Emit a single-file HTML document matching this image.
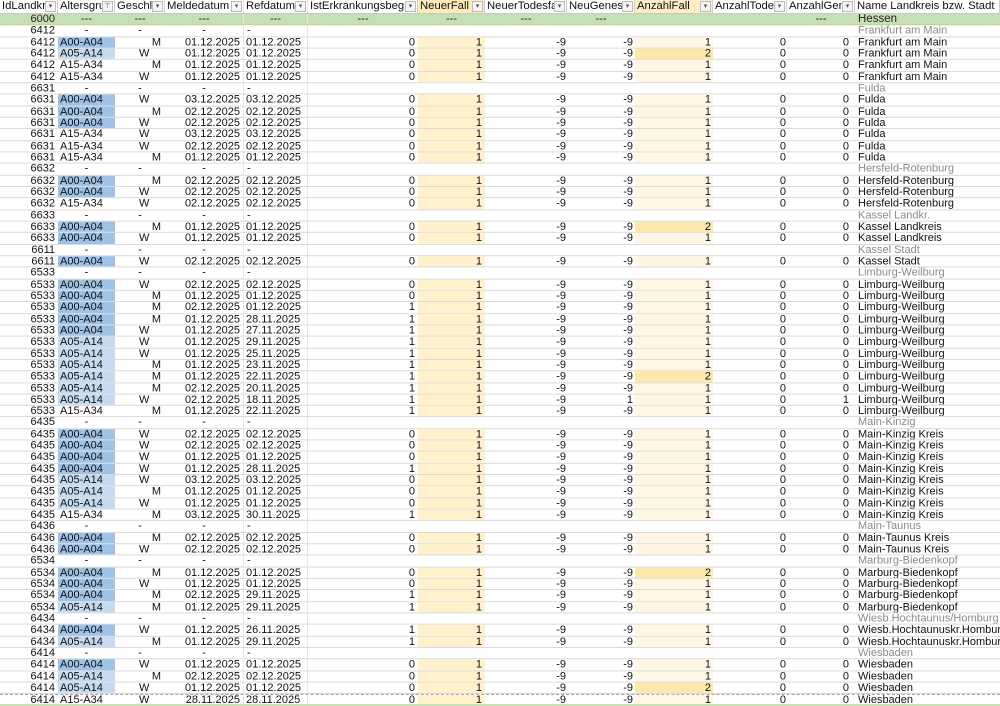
<!DOCTYPE html>
<html><head><meta charset="utf-8"><style>
*{margin:0;padding:0;box-sizing:border-box}
body{width:1000px;height:706px;overflow:hidden;background:#fff;font-family:"Liberation Sans",Arial,sans-serif;font-size:11px;color:#111;position:relative}
.h{position:absolute;left:0;top:0;height:13.5px;width:1000px;display:flex;border-bottom:1px solid #c8c8c8;background:#fff}
.h>i{font-style:normal;position:relative;overflow:hidden;white-space:nowrap;border-right:1px solid #d0d0d0;padding-left:2px;line-height:13px;font-size:11.3px}
.h>i>s{position:absolute;right:1px;top:1px;width:11px;height:11px;border:1px solid #bbb;background:#f4f4f4;text-decoration:none;font-size:7px;line-height:9px;text-align:center;color:#555}
.b{position:absolute;left:0;top:13.5px;width:1000px;transform:scaleY(1.0177);transform-origin:0 0}
.r{display:flex;height:11.333px;border-bottom:1px solid #dadada;line-height:10.5px;white-space:nowrap}
.r>i{font-style:normal;overflow:hidden;flex:none;display:block}
.h>i:nth-child(1),.r>i:nth-child(1){width:58px;text-align:right;padding-right:3px}
.h>i:nth-child(2),.r>i:nth-child(2){width:57px;padding-left:2px}
.h>i:nth-child(3),.r>i:nth-child(3){width:50px}
.h>i:nth-child(4),.r>i:nth-child(4){width:79px;text-align:right;padding-right:3px;border-right:1px solid #e6e6e6}
.h>i:nth-child(5),.r>i:nth-child(5){width:64px;padding-left:2px;border-right:1px solid #e6e6e6}
.h>i:nth-child(6),.r>i:nth-child(6){width:110px;text-align:right;padding-right:3px}
.h>i:nth-child(7),.r>i:nth-child(7){width:67px;text-align:right;padding-right:3px;background:#fff1cb}
.h>i:nth-child(8),.r>i:nth-child(8){width:82px;text-align:right;padding-right:1px}
.h>i:nth-child(9),.r>i:nth-child(9){width:68px;text-align:right;padding-right:2px}
.h>i:nth-child(10),.r>i:nth-child(10){width:78px;text-align:right;padding-right:2px;background:#fff7e3}
.h>i:nth-child(11),.r>i:nth-child(11){width:74px;text-align:right;padding-right:1px}
.h>i:nth-child(12),.r>i:nth-child(12){width:68px;text-align:right;padding-right:6px}
.h>i:nth-child(13),.r>i:nth-child(13){width:145px;padding-left:3px}
.h>i{text-align:left!important;padding-left:2px!important}
.h>i:nth-child(7){background:#fdebb8}
.h>i:nth-child(10){background:#fdedc4}
.r>i.x{background:#9fc3e7}
.r>i.y{background:#c4dbf1}
.r>i.m{text-align:right;padding-right:4px}
.r>i.w{padding-left:24px}
.r>i.t{background:#fde7ab!important}
.d>i:nth-child(7),.d>i:nth-child(10){background:none!important}
.d>i:nth-child(2),.d>i:nth-child(3),.d>i:nth-child(4){text-align:center;padding:0}
.d>i:nth-child(5){padding-left:3px}
.d>i:nth-child(13){color:#8a8a8a}
.g{background:#c6e0b4;border-bottom:1px solid #b5d3a0}
.g>i{background:none!important;color:#222}
.g>i:nth-child(n+2):nth-child(-n+12){text-align:center!important;padding:0!important}
.g>i:nth-child(13){font-size:11.5px}
.last{border-top:1px dashed #999}
.foot{position:absolute;left:0;top:704px;width:1000px;height:2px;background:#c6e0b4}
</style></head><body>
<div class="h"><i>IdLandkre<s>▾</s></i><i>Altersgru<s>⊤</s></i><i>Geschle<s>▾</s></i><i>Meldedatum<s>▾</s></i><i>Refdatum<s>▾</s></i><i>IstErkrankungsbegi<s>▾</s></i><i>NeuerFall<s>▾</s></i><i>NeuerTodesfa<s>▾</s></i><i>NeuGenese<s>▾</s></i><i>AnzahlFall<s>▾</s></i><i>AnzahlTodes<s>▾</s></i><i>AnzahlGen<s>▾</s></i><i>Name Landkreis bzw. Stadt</i></div>
<div class="b">
<div class="r g"><i>6000</i><i>---</i><i>---</i><i>---</i><i>---</i><i>---</i><i>---</i><i>---</i><i>---</i><i></i><i></i><i>---</i><i>Hessen</i></div>
<div class="r d"><i>6412</i><i>-</i><i>-</i><i>-</i><i>-</i><i></i><i></i><i></i><i></i><i></i><i></i><i></i><i>Frankfurt am Main</i></div>
<div class="r"><i>6412</i><i class="x">A00-A04</i><i class="m">M</i><i>01.12.2025</i><i>01.12.2025</i><i>0</i><i>1</i><i>-9</i><i>-9</i><i>1</i><i>0</i><i>0</i><i>Frankfurt am Main</i></div>
<div class="r"><i>6412</i><i class="y">A05-A14</i><i class="w">W</i><i>01.12.2025</i><i>01.12.2025</i><i>0</i><i>1</i><i>-9</i><i>-9</i><i class="t">2</i><i>0</i><i>0</i><i>Frankfurt am Main</i></div>
<div class="r"><i>6412</i><i>A15-A34</i><i class="m">M</i><i>01.12.2025</i><i>01.12.2025</i><i>0</i><i>1</i><i>-9</i><i>-9</i><i>1</i><i>0</i><i>0</i><i>Frankfurt am Main</i></div>
<div class="r"><i>6412</i><i>A15-A34</i><i class="w">W</i><i>01.12.2025</i><i>01.12.2025</i><i>0</i><i>1</i><i>-9</i><i>-9</i><i>1</i><i>0</i><i>0</i><i>Frankfurt am Main</i></div>
<div class="r d"><i>6631</i><i>-</i><i>-</i><i>-</i><i>-</i><i></i><i></i><i></i><i></i><i></i><i></i><i></i><i>Fulda</i></div>
<div class="r"><i>6631</i><i class="x">A00-A04</i><i class="w">W</i><i>03.12.2025</i><i>03.12.2025</i><i>0</i><i>1</i><i>-9</i><i>-9</i><i>1</i><i>0</i><i>0</i><i>Fulda</i></div>
<div class="r"><i>6631</i><i class="x">A00-A04</i><i class="m">M</i><i>02.12.2025</i><i>02.12.2025</i><i>0</i><i>1</i><i>-9</i><i>-9</i><i>1</i><i>0</i><i>0</i><i>Fulda</i></div>
<div class="r"><i>6631</i><i class="x">A00-A04</i><i class="w">W</i><i>02.12.2025</i><i>02.12.2025</i><i>0</i><i>1</i><i>-9</i><i>-9</i><i>1</i><i>0</i><i>0</i><i>Fulda</i></div>
<div class="r"><i>6631</i><i>A15-A34</i><i class="w">W</i><i>03.12.2025</i><i>03.12.2025</i><i>0</i><i>1</i><i>-9</i><i>-9</i><i>1</i><i>0</i><i>0</i><i>Fulda</i></div>
<div class="r"><i>6631</i><i>A15-A34</i><i class="w">W</i><i>02.12.2025</i><i>02.12.2025</i><i>0</i><i>1</i><i>-9</i><i>-9</i><i>1</i><i>0</i><i>0</i><i>Fulda</i></div>
<div class="r"><i>6631</i><i>A15-A34</i><i class="m">M</i><i>01.12.2025</i><i>01.12.2025</i><i>0</i><i>1</i><i>-9</i><i>-9</i><i>1</i><i>0</i><i>0</i><i>Fulda</i></div>
<div class="r d"><i>6632</i><i>-</i><i>-</i><i>-</i><i>-</i><i></i><i></i><i></i><i></i><i></i><i></i><i></i><i>Hersfeld-Rotenburg</i></div>
<div class="r"><i>6632</i><i class="x">A00-A04</i><i class="m">M</i><i>02.12.2025</i><i>02.12.2025</i><i>0</i><i>1</i><i>-9</i><i>-9</i><i>1</i><i>0</i><i>0</i><i>Hersfeld-Rotenburg</i></div>
<div class="r"><i>6632</i><i class="x">A00-A04</i><i class="w">W</i><i>02.12.2025</i><i>02.12.2025</i><i>0</i><i>1</i><i>-9</i><i>-9</i><i>1</i><i>0</i><i>0</i><i>Hersfeld-Rotenburg</i></div>
<div class="r"><i>6632</i><i>A15-A34</i><i class="w">W</i><i>02.12.2025</i><i>02.12.2025</i><i>0</i><i>1</i><i>-9</i><i>-9</i><i>1</i><i>0</i><i>0</i><i>Hersfeld-Rotenburg</i></div>
<div class="r d"><i>6633</i><i>-</i><i>-</i><i>-</i><i>-</i><i></i><i></i><i></i><i></i><i></i><i></i><i></i><i>Kassel Landkr.</i></div>
<div class="r"><i>6633</i><i class="x">A00-A04</i><i class="m">M</i><i>01.12.2025</i><i>01.12.2025</i><i>0</i><i>1</i><i>-9</i><i>-9</i><i class="t">2</i><i>0</i><i>0</i><i>Kassel Landkreis</i></div>
<div class="r"><i>6633</i><i class="x">A00-A04</i><i class="w">W</i><i>01.12.2025</i><i>01.12.2025</i><i>0</i><i>1</i><i>-9</i><i>-9</i><i>1</i><i>0</i><i>0</i><i>Kassel Landkreis</i></div>
<div class="r d"><i>6611</i><i>-</i><i>-</i><i>-</i><i>-</i><i></i><i></i><i></i><i></i><i></i><i></i><i></i><i>Kassel Stadt</i></div>
<div class="r"><i>6611</i><i class="x">A00-A04</i><i class="w">W</i><i>02.12.2025</i><i>02.12.2025</i><i>0</i><i>1</i><i>-9</i><i>-9</i><i>1</i><i>0</i><i>0</i><i>Kassel Stadt</i></div>
<div class="r d"><i>6533</i><i>-</i><i>-</i><i>-</i><i>-</i><i></i><i></i><i></i><i></i><i></i><i></i><i></i><i>Limburg-Weilburg</i></div>
<div class="r"><i>6533</i><i class="x">A00-A04</i><i class="w">W</i><i>02.12.2025</i><i>02.12.2025</i><i>0</i><i>1</i><i>-9</i><i>-9</i><i>1</i><i>0</i><i>0</i><i>Limburg-Weilburg</i></div>
<div class="r"><i>6533</i><i class="x">A00-A04</i><i class="m">M</i><i>01.12.2025</i><i>01.12.2025</i><i>0</i><i>1</i><i>-9</i><i>-9</i><i>1</i><i>0</i><i>0</i><i>Limburg-Weilburg</i></div>
<div class="r"><i>6533</i><i class="x">A00-A04</i><i class="m">M</i><i>02.12.2025</i><i>01.12.2025</i><i>1</i><i>1</i><i>-9</i><i>-9</i><i>1</i><i>0</i><i>0</i><i>Limburg-Weilburg</i></div>
<div class="r"><i>6533</i><i class="x">A00-A04</i><i class="m">M</i><i>01.12.2025</i><i>28.11.2025</i><i>1</i><i>1</i><i>-9</i><i>-9</i><i>1</i><i>0</i><i>0</i><i>Limburg-Weilburg</i></div>
<div class="r"><i>6533</i><i class="x">A00-A04</i><i class="w">W</i><i>01.12.2025</i><i>27.11.2025</i><i>1</i><i>1</i><i>-9</i><i>-9</i><i>1</i><i>0</i><i>0</i><i>Limburg-Weilburg</i></div>
<div class="r"><i>6533</i><i class="y">A05-A14</i><i class="w">W</i><i>01.12.2025</i><i>29.11.2025</i><i>1</i><i>1</i><i>-9</i><i>-9</i><i>1</i><i>0</i><i>0</i><i>Limburg-Weilburg</i></div>
<div class="r"><i>6533</i><i class="y">A05-A14</i><i class="w">W</i><i>01.12.2025</i><i>25.11.2025</i><i>1</i><i>1</i><i>-9</i><i>-9</i><i>1</i><i>0</i><i>0</i><i>Limburg-Weilburg</i></div>
<div class="r"><i>6533</i><i class="y">A05-A14</i><i class="m">M</i><i>01.12.2025</i><i>23.11.2025</i><i>1</i><i>1</i><i>-9</i><i>-9</i><i>1</i><i>0</i><i>0</i><i>Limburg-Weilburg</i></div>
<div class="r"><i>6533</i><i class="y">A05-A14</i><i class="m">M</i><i>01.12.2025</i><i>22.11.2025</i><i>1</i><i>1</i><i>-9</i><i>-9</i><i class="t">2</i><i>0</i><i>0</i><i>Limburg-Weilburg</i></div>
<div class="r"><i>6533</i><i class="y">A05-A14</i><i class="m">M</i><i>02.12.2025</i><i>20.11.2025</i><i>1</i><i>1</i><i>-9</i><i>-9</i><i>1</i><i>0</i><i>0</i><i>Limburg-Weilburg</i></div>
<div class="r"><i>6533</i><i class="y">A05-A14</i><i class="w">W</i><i>02.12.2025</i><i>18.11.2025</i><i>1</i><i>1</i><i>-9</i><i>1</i><i>1</i><i>0</i><i>1</i><i>Limburg-Weilburg</i></div>
<div class="r"><i>6533</i><i>A15-A34</i><i class="m">M</i><i>01.12.2025</i><i>22.11.2025</i><i>1</i><i>1</i><i>-9</i><i>-9</i><i>1</i><i>0</i><i>0</i><i>Limburg-Weilburg</i></div>
<div class="r d"><i>6435</i><i>-</i><i>-</i><i>-</i><i>-</i><i></i><i></i><i></i><i></i><i></i><i></i><i></i><i>Main-Kinzig</i></div>
<div class="r"><i>6435</i><i class="x">A00-A04</i><i class="w">W</i><i>02.12.2025</i><i>02.12.2025</i><i>0</i><i>1</i><i>-9</i><i>-9</i><i>1</i><i>0</i><i>0</i><i>Main-Kinzig Kreis</i></div>
<div class="r"><i>6435</i><i class="x">A00-A04</i><i class="w">W</i><i>02.12.2025</i><i>02.12.2025</i><i>0</i><i>1</i><i>-9</i><i>-9</i><i>1</i><i>0</i><i>0</i><i>Main-Kinzig Kreis</i></div>
<div class="r"><i>6435</i><i class="x">A00-A04</i><i class="w">W</i><i>01.12.2025</i><i>01.12.2025</i><i>0</i><i>1</i><i>-9</i><i>-9</i><i>1</i><i>0</i><i>0</i><i>Main-Kinzig Kreis</i></div>
<div class="r"><i>6435</i><i class="x">A00-A04</i><i class="w">W</i><i>01.12.2025</i><i>28.11.2025</i><i>1</i><i>1</i><i>-9</i><i>-9</i><i>1</i><i>0</i><i>0</i><i>Main-Kinzig Kreis</i></div>
<div class="r"><i>6435</i><i class="y">A05-A14</i><i class="w">W</i><i>03.12.2025</i><i>03.12.2025</i><i>0</i><i>1</i><i>-9</i><i>-9</i><i>1</i><i>0</i><i>0</i><i>Main-Kinzig Kreis</i></div>
<div class="r"><i>6435</i><i class="y">A05-A14</i><i class="m">M</i><i>01.12.2025</i><i>01.12.2025</i><i>0</i><i>1</i><i>-9</i><i>-9</i><i>1</i><i>0</i><i>0</i><i>Main-Kinzig Kreis</i></div>
<div class="r"><i>6435</i><i class="y">A05-A14</i><i class="w">W</i><i>01.12.2025</i><i>01.12.2025</i><i>0</i><i>1</i><i>-9</i><i>-9</i><i>1</i><i>0</i><i>0</i><i>Main-Kinzig Kreis</i></div>
<div class="r"><i>6435</i><i>A15-A34</i><i class="m">M</i><i>03.12.2025</i><i>30.11.2025</i><i>1</i><i>1</i><i>-9</i><i>-9</i><i>1</i><i>0</i><i>0</i><i>Main-Kinzig Kreis</i></div>
<div class="r d"><i>6436</i><i>-</i><i>-</i><i>-</i><i>-</i><i></i><i></i><i></i><i></i><i></i><i></i><i></i><i>Main-Taunus</i></div>
<div class="r"><i>6436</i><i class="x">A00-A04</i><i class="m">M</i><i>02.12.2025</i><i>02.12.2025</i><i>0</i><i>1</i><i>-9</i><i>-9</i><i>1</i><i>0</i><i>0</i><i>Main-Taunus Kreis</i></div>
<div class="r"><i>6436</i><i class="x">A00-A04</i><i class="w">W</i><i>02.12.2025</i><i>02.12.2025</i><i>0</i><i>1</i><i>-9</i><i>-9</i><i>1</i><i>0</i><i>0</i><i>Main-Taunus Kreis</i></div>
<div class="r d"><i>6534</i><i>-</i><i>-</i><i>-</i><i>-</i><i></i><i></i><i></i><i></i><i></i><i></i><i></i><i>Marburg-Biedenkopf</i></div>
<div class="r"><i>6534</i><i class="x">A00-A04</i><i class="m">M</i><i>01.12.2025</i><i>01.12.2025</i><i>0</i><i>1</i><i>-9</i><i>-9</i><i class="t">2</i><i>0</i><i>0</i><i>Marburg-Biedenkopf</i></div>
<div class="r"><i>6534</i><i class="x">A00-A04</i><i class="w">W</i><i>01.12.2025</i><i>01.12.2025</i><i>0</i><i>1</i><i>-9</i><i>-9</i><i>1</i><i>0</i><i>0</i><i>Marburg-Biedenkopf</i></div>
<div class="r"><i>6534</i><i class="x">A00-A04</i><i class="m">M</i><i>02.12.2025</i><i>29.11.2025</i><i>1</i><i>1</i><i>-9</i><i>-9</i><i>1</i><i>0</i><i>0</i><i>Marburg-Biedenkopf</i></div>
<div class="r"><i>6534</i><i class="y">A05-A14</i><i class="m">M</i><i>01.12.2025</i><i>29.11.2025</i><i>1</i><i>1</i><i>-9</i><i>-9</i><i>1</i><i>0</i><i>0</i><i>Marburg-Biedenkopf</i></div>
<div class="r d"><i>6434</i><i>-</i><i>-</i><i>-</i><i>-</i><i></i><i></i><i></i><i></i><i></i><i></i><i></i><i>Wiesb.Hochtaunus/Homburg</i></div>
<div class="r"><i>6434</i><i class="x">A00-A04</i><i class="w">W</i><i>01.12.2025</i><i>26.11.2025</i><i>1</i><i>1</i><i>-9</i><i>-9</i><i>1</i><i>0</i><i>0</i><i>Wiesb.Hochtaunuskr.Homburg</i></div>
<div class="r"><i>6434</i><i class="y">A05-A14</i><i class="m">M</i><i>01.12.2025</i><i>29.11.2025</i><i>1</i><i>1</i><i>-9</i><i>-9</i><i>1</i><i>0</i><i>0</i><i>Wiesb.Hochtaunuskr.Homburg</i></div>
<div class="r d"><i>6414</i><i>-</i><i>-</i><i>-</i><i>-</i><i></i><i></i><i></i><i></i><i></i><i></i><i></i><i>Wiesbaden</i></div>
<div class="r"><i>6414</i><i class="x">A00-A04</i><i class="w">W</i><i>01.12.2025</i><i>01.12.2025</i><i>0</i><i>1</i><i>-9</i><i>-9</i><i>1</i><i>0</i><i>0</i><i>Wiesbaden</i></div>
<div class="r"><i>6414</i><i class="y">A05-A14</i><i class="m">M</i><i>02.12.2025</i><i>02.12.2025</i><i>0</i><i>1</i><i>-9</i><i>-9</i><i>1</i><i>0</i><i>0</i><i>Wiesbaden</i></div>
<div class="r"><i>6414</i><i class="y">A05-A14</i><i class="w">W</i><i>01.12.2025</i><i>01.12.2025</i><i>0</i><i>1</i><i>-9</i><i>-9</i><i class="t">2</i><i>0</i><i>0</i><i>Wiesbaden</i></div>
<div class="r last"><i>6414</i><i>A15-A34</i><i class="w">W</i><i>28.11.2025</i><i>28.11.2025</i><i>0</i><i>1</i><i>-9</i><i>-9</i><i>1</i><i>0</i><i>0</i><i>Wiesbaden</i></div>
</div>
<div class="foot"></div>
</body></html>
